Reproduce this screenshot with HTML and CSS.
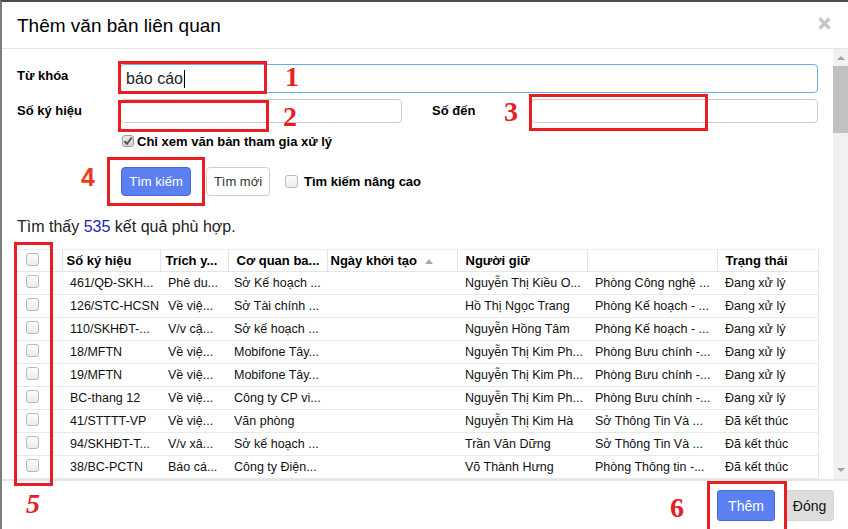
FILE: index.html
```html
<!DOCTYPE html>
<html lang="vi">
<head>
<meta charset="utf-8">
<title>Thêm văn bản liên quan</title>
<link rel="stylesheet" href="styles.css">
</head>
<body>
<div class="modal">
  <div class="modal-header">
    <h1 class="modal-title">Thêm văn bản liên quan</h1>
    <span class="close">
      <svg width="13" height="13" viewBox="0 0 13 13"><path d="M1.5 1.5 L11.5 11.5 M11.5 1.5 L1.5 11.5" stroke="#c6c6c6" stroke-width="3.2"/></svg>
    </span>
  </div>
  <div class="modal-body">
    <div class="content">
      <div class="form-row">
        <label class="lbl">Từ khóa</label>
        <div class="input input-focus"><span class="val">báo cáo</span><span class="caret"></span></div>
      </div>
      <div class="form-row row2">
        <label class="lbl">Số ký hiệu</label>
        <div class="input input-sm w-left"></div>
        <label class="lbl lbl-right">Số đến</label>
        <div class="input input-sm w-right"></div>
      </div>
      <div class="check-row">
        <span class="cb cb-checked"><svg width="10" height="10" viewBox="0 0 10 10"><path d="M1.5 5.2 L4 7.8 L8.8 1.5" stroke="#555" stroke-width="2" fill="none"/></svg></span>
        <span class="bold">Chỉ xem văn bản tham gia xử lý</span>
      </div>
      <div class="btn-row">
        <button class="btn btn-primary">Tìm kiếm</button>
        <button class="btn btn-default">Tìm mới</button>
        <span class="cb cb-lg"></span>
        <span class="bold adv">Tìm kiếm nâng cao</span>
      </div>
      <p class="found">Tìm thấy <span class="num">535</span> kết quả phù hợp.</p>
      <table class="grid">
        <colgroup>
          <col class="c0"><col class="c1"><col class="c2"><col class="c3"><col class="c4"><col class="c5"><col class="c6"><col class="c7">
        </colgroup>
        <thead>
          <tr>
            <th class="cbc"><span class="cb"></span></th>
            <th class="h1">Số ký hiệu</th>
            <th class="h2">Trích y...</th>
            <th class="h3">Cơ quan ba...</th>
            <th class="h4">Ngày khởi tạo<span class="sort"></span></th>
            <th class="h5">Người giữ</th>
            <th></th>
            <th class="h7">Trạng thái</th>
          </tr>
        </thead>
        <tbody>
          <tr><td class="cbc"><span class="cb"></span></td><td>461/QĐ-SKH...</td><td>Phê du...</td><td class="t3">Sở Kế hoạch ...</td><td></td><td>Nguyễn Thị Kiều O...</td><td>Phòng Công nghệ ...</td><td>Đang xử lý</td></tr>
          <tr><td class="cbc"><span class="cb"></span></td><td>126/STC-HCSN</td><td>Về việ...</td><td class="t3">Sở Tài chính ...</td><td></td><td>Hồ Thị Ngọc Trang</td><td>Phòng Kế hoạch - ...</td><td>Đang xử lý</td></tr>
          <tr><td class="cbc"><span class="cb"></span></td><td>110/SKHĐT-...</td><td>V/v cậ...</td><td class="t3">Sở kế hoạch ...</td><td></td><td>Nguyễn Hồng Tâm</td><td>Phòng Kế hoạch - ...</td><td>Đang xử lý</td></tr>
          <tr><td class="cbc"><span class="cb"></span></td><td>18/MFTN</td><td>Về việ...</td><td class="t3">Mobifone Tây...</td><td></td><td>Nguyễn Thị Kim Ph...</td><td>Phòng Bưu chính -...</td><td>Đang xử lý</td></tr>
          <tr><td class="cbc"><span class="cb"></span></td><td>19/MFTN</td><td>Về việ...</td><td class="t3">Mobifone Tây...</td><td></td><td>Nguyễn Thị Kim Ph...</td><td>Phòng Bưu chính -...</td><td>Đang xử lý</td></tr>
          <tr><td class="cbc"><span class="cb"></span></td><td>BC-thang 12</td><td>Về việ...</td><td class="t3">Công ty CP vi...</td><td></td><td>Nguyễn Thị Kim Ph...</td><td>Phòng Bưu chính -...</td><td>Đang xử lý</td></tr>
          <tr><td class="cbc"><span class="cb"></span></td><td>41/STTTT-VP</td><td>Về việ...</td><td class="t3">Văn phòng</td><td></td><td>Nguyễn Thị Kim Hà</td><td>Sở Thông Tin Và ...</td><td>Đã kết thúc</td></tr>
          <tr><td class="cbc"><span class="cb"></span></td><td>94/SKHĐT-T...</td><td>V/v xâ...</td><td class="t3">Sở kế hoạch ...</td><td></td><td>Trần Văn Dững</td><td>Sở Thông Tin Và ...</td><td>Đã kết thúc</td></tr>
          <tr><td class="cbc"><span class="cb"></span></td><td>38/BC-PCTN</td><td>Báo cá...</td><td class="t3">Công ty Điện...</td><td></td><td>Võ Thành Hưng</td><td>Phòng Thông tin -...</td><td>Đã kết thúc</td></tr>
        </tbody>
      </table>
    </div>
    <div class="scrollbar">
      <span class="arr arr-up"></span>
      <span class="thumb"></span>
      <span class="arr arr-down"></span>
    </div>
  </div>
  <div class="modal-footer">
    <button class="btn btn-primary btn-lg">Thêm</button>
    <button class="btn btn-gray btn-lg">Đóng</button>
  </div>

  <div class="ann ann-box a1"></div>
  <div class="ann ann-num n1">1</div>
  <div class="ann ann-box a2"></div>
  <div class="ann ann-num n2">2</div>
  <div class="ann ann-box a3"></div>
  <div class="ann ann-num n3">3</div>
  <div class="ann ann-box a4"></div>
  <div class="ann ann-num n4">4</div>
  <div class="ann ann-box a5"></div>
  <div class="ann ann-num n5">5</div>
  <div class="ann ann-box a6"></div>
  <div class="ann ann-num n6">6</div>
</div>
</body>
</html>
```

FILE: styles.css
```css
* { box-sizing: border-box; }
html, body {
  margin: 0;
  padding: 0;
  width: 848px;
  height: 529px;
  overflow: hidden;
  background: #fff;
  font-family: "Liberation Sans", Arial, sans-serif;
  color: #000;
}
.modal {
  position: relative;
  width: 848px;
  height: 529px;
  border-top: 2px solid #4d4d4d;
  border-left: 2px solid #7c7c7c;
  display: flex;
  flex-direction: column;
  background: #fff;
}
.modal-header {
  height: 47px;
  flex: none;
  border-bottom: 1px solid #e5e5e5;
  display: flex;
  align-items: center;
  justify-content: space-between;
  padding: 0 17px 0 15px;
}
.modal-title {
  margin: 0;
  font-size: 19px;
  font-weight: normal;
  line-height: 24px;
  padding-top: 1px;
}
.close { display: flex; margin-top: -4px; }

.modal-body {
  flex: 1;
  display: flex;
  overflow: hidden;
  min-height: 0;
}
.content {
  flex: 1;
  padding: 15px 15px 0 15px;
  overflow: hidden;
  font-size: 13px;
}
.form-row {
  display: flex;
  align-items: center;
}
.lbl {
  width: 103px;
  flex: none;
  font-weight: bold;
  font-size: 13px;
  padding-bottom: 6px;
}
.input {
  border: 1px solid #cccccc;
  border-radius: 4px;
  background: #fff;
}
.input-focus {
  flex: 1;
  height: 29px;
  border-color: #66afe9;
  display: flex;
  align-items: center;
  padding-left: 5px;
  font-size: 16px;
  color: #222;
}
.caret {
  display: inline-block;
  width: 1px;
  height: 18px;
  background: #000;
  margin-left: 1px;
}
.row2 { margin-top: 6px; }
.row2 .lbl { padding-bottom: 2px; }
.input-sm { height: 24px; }
.w-left { width: 282px; }
.lbl-right { width: 99px; margin-left: 30px; }
.w-right { width: 287px; }

.check-row {
  display: flex;
  align-items: center;
  margin: 10px 0 0 105px;
  height: 16px;
  font-size: 13px;
}
.bold { font-weight: bold; }
.cb {
  display: inline-flex;
  align-items: center;
  justify-content: center;
  width: 13px;
  height: 13px;
  border: 1px solid #b9b9b9;
  border-radius: 3px;
  background: linear-gradient(#fdfdfd, #ececec);
  flex: none;
}
.cb-checked {
  width: 12px;
  height: 12px;
  margin-right: 3px;
  background: linear-gradient(#e9e9e9, #d4d4d4);
  border-color: #9e9e9e;
}
.btn-row {
  display: flex;
  align-items: center;
  margin: 18px 0 0 104px;
  height: 29px;
}
.btn {
  font-family: "Liberation Sans", Arial, sans-serif;
  font-size: 13px;
  border-radius: 4px;
  height: 29px;
  padding: 0;
  cursor: pointer;
}
.btn-primary {
  background: #5b80f1;
  border: 1px solid #4a6bd6;
  color: #fff;
  width: 70px;
}
.btn-default {
  background: #fff;
  border: 1px solid #cfcfcf;
  color: #333;
  width: 64px;
  margin-left: 15px;
}
.btn-row .cb { margin-left: 15px; }
.adv { margin-left: 6px; }
.found {
  margin: 21px 0 0 0;
  font-size: 16px;
  line-height: 20px;
  color: #222;
}
.num { color: #1d1fb5; }

.grid {
  margin-top: 12px;
  width: 801px;
  border-collapse: collapse;
  table-layout: fixed;
  font-size: 12.5px;
}
.c0 { width: 45px; }
.c1 { width: 98px; }
.c2 { width: 68px; }
.c3 { width: 99px; }
.c4 { width: 130px; }
.c5 { width: 130px; }
.c6 { width: 130px; }
.c7 { width: 101px; }
.grid th {
  height: 22px;
  text-align: left;
  font-weight: bold;
  font-size: 13px;
  padding: 0 0 0 4px;
  border: 1px solid #e3e3f1;
  border-top: 1px solid #ececf5;
  white-space: nowrap;
  overflow: hidden;
  position: relative;
}
.grid th.h2 { padding-left: 5px; }
.grid th.h3 { padding-left: 8px; }
.grid th.h4 { padding-left: 3px; }
.grid th.h5 { padding-left: 8px; }
.grid th.h7 { padding-left: 8px; }
.grid td {
  height: 23px;
  padding: 0 0 0 8px;
  border-bottom: 1px solid #e8e8ee;
  white-space: nowrap;
  overflow: hidden;
  color: #111;
}
.grid td:last-child { border-right: 1px solid #e3e3f1; padding-left: 8px; }
.grid td.t3 { padding-left: 6px; }
.grid .cbc { padding: 0 0 0 9px; border-left: none; }
.grid th.cbc { border-left: none; }
.grid td.cbc { border-left: none; }
.sort {
  position: absolute;
  right: 24px;
  top: 9px;
  width: 0;
  height: 0;
  border-left: 4px solid transparent;
  border-right: 4px solid transparent;
  border-bottom: 5px solid #a9a9a9;
}

.scrollbar {
  width: 15px;
  flex: none;
  background: #f1f1f1;
  position: relative;
  display: flex;
  flex-direction: column;
  align-items: center;
}
.arr {
  width: 0;
  height: 0;
  border-left: 4px solid transparent;
  border-right: 4px solid transparent;
}
.arr-up { border-bottom: 4px solid #a3a3a3; margin-top: 7px; }
.arr-down { border-top: 4px solid #a3a3a3; margin-top: auto; margin-bottom: 7px; }
.thumb {
  width: 15px;
  height: 67px;
  background: #c1c1c1;
  margin-top: 6px;
}

.modal-footer {
  height: 50px;
  flex: none;
  border-top: 2px solid #e6e6e6;
  display: flex;
  justify-content: flex-end;
  padding: 9px 14px 0 0;
  gap: 10px;
}
.btn-lg {
  height: 31px;
  font-size: 14px;
  border-radius: 3px;
}
.modal-footer .btn-primary { width: 58px; }
.btn-gray {
  background: #dddddd;
  border: 1px solid #d6d6d6;
  color: #111;
  width: 49px;
}

.ann { position: absolute; pointer-events: none; }
.ann-box { border: 3px solid #e81e25; }
.ann-num {
  font-family: "Liberation Serif", "Times New Roman", serif;
  font-weight: bold;
  font-size: 28px;
  line-height: 28px;
  color: #e81e25;
}
.a1 { left: 116px; top: 59px; width: 149px; height: 33px; }
.a2 { left: 116px; top: 98px; width: 151px; height: 32px; }
.a3 { left: 527px; top: 92px; width: 179px; height: 37px; }
.a4 { left: 105px; top: 155px; width: 98px; height: 49px; }
.a5 { left: 12px; top: 240px; width: 39px; height: 244px; }
.a6 { left: 705px; top: 479px; width: 80px; height: 52px; }
.n1 { left: 283px; top: 61px; }
.n2 { left: 281px; top: 101px; }
.n3 { left: 502px; top: 96px; }
.n4 { left: 79px; top: 161px; color: #ee3a1c; font-family: "Liberation Sans", Arial, sans-serif; font-size: 25px; }
.n5 { left: 24px; top: 488px; font-style: italic; }
.n6 { left: 668px; top: 492px; }
```
